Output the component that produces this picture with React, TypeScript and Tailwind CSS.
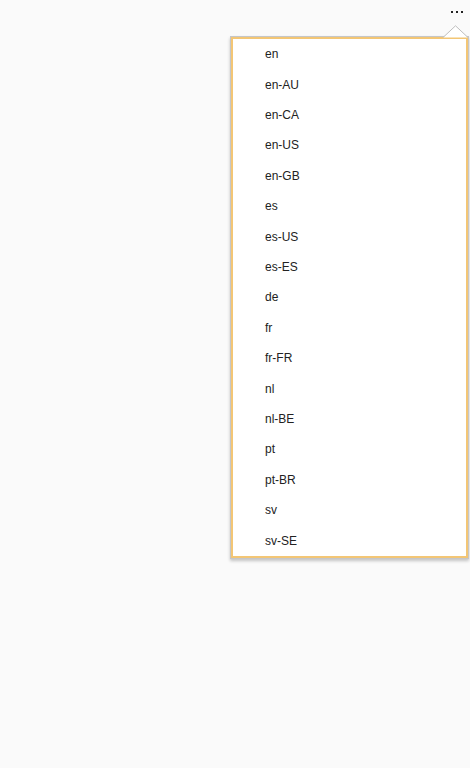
const locales = [
  "en",
  "en-AU",
  "en-CA",
  "en-US",
  "en-GB",
  "es",
  "es-US",
  "es-ES",
  "de",
  "fr",
  "fr-FR",
  "nl",
  "nl-BE",
  "pt",
  "pt-BR",
  "sv",
  "sv-SE",
];

export default function App() {
  return (
    <div className="relative h-[768px] w-[470px] overflow-hidden bg-[#fafafa] font-['Liberation_Sans',Arial,sans-serif]">
      {/* More button */}
      <button className="absolute right-[6px] top-[7px] flex h-[10px] items-center gap-[3px] px-[1px]">
        <span className="h-[2px] w-[2px] bg-[#222]" />
        <span className="h-[2px] w-[2px] bg-[#222]" />
        <span className="h-[2px] w-[2px] bg-[#222]" />
      </button>

      {/* Menu */}
      <div className="absolute left-[230px] top-[36px] h-[523px] w-[239px] border border-[#c6c6c6] bg-white shadow-[0_2px_3px_rgba(0,0,0,0.22)]">
        <ul className="flex h-full flex-col border-2 border-[#f3c675]">
          {locales.map((l) => (
            <li
              key={l}
              className="flex flex-1 items-center pl-[32px] text-[12px] text-[#222]"
            >
              {l}
            </li>
          ))}
        </ul>
      </div>

      {/* Caret */}
      <svg
        className="absolute left-[443px] top-[25px]"
        width="26"
        height="13"
        viewBox="0 0 26 13"
      >
        <path d="M0 12.5 L12.5 0.8 L25 12.5" fill="#fff" stroke="#bdbdbd" strokeWidth="1" />
      </svg>
    </div>
  );
}
